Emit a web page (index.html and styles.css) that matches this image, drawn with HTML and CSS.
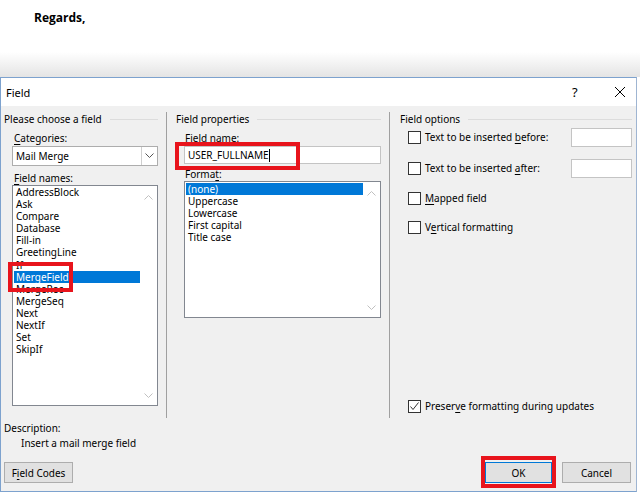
FILE: index.html
```html
<!DOCTYPE html>
<html lang="en">
<head>
  <meta charset="UTF-8" />
  <title>Field</title>
  <link rel="stylesheet" href="styles.css">
</head>
<body>

  <div class="doc">
    <p class="regards">Regards,</p>
  </div>

  <div class="dialog">
    <div class="titlebar">
      <span class="title">Field</span>
      <span class="help">?</span>
      <span class="close">
        <svg width="12" height="12" viewBox="0 0 12 12"><path d="M1 1L11 11M11 1L1 11" stroke="#000" stroke-width="1" fill="none"/></svg>
      </span>
    </div>

    <div class="dlg-body">
      <div class="panes">

        <!-- left: category + field list -->
        <div class="pane pane-choose">
          <div class="group-title"><span>Please choose a field</span></div>
          <div class="lbl"><u>C</u>ategories:</div>
          <div class="combo">
            <span class="combo-text">Mail Merge</span>
            <span class="combo-btn">
              <svg width="9" height="6" viewBox="0 0 9 6"><path d="M0.5 0.5L4.5 4.5L8.5 0.5" stroke="#555" fill="none"/></svg>
            </span>
          </div>
          <div class="lbl"><u>F</u>ield names:</div>
          <div class="listbox names">
            <ul class="items">
              <li>AddressBlock</li>
              <li>Ask</li>
              <li>Compare</li>
              <li>Database</li>
              <li>Fill-in</li>
              <li>GreetingLine</li>
              <li>If</li>
              <li class="sel"><span class="marked">MergeField<i class="callout callout-list"></i></span></li>
              <li>MergeRec</li>
              <li>MergeSeq</li>
              <li>Next</li>
              <li>NextIf</li>
              <li>Set</li>
              <li>SkipIf</li>
            </ul>
            <div class="vscroll">
              <svg width="9" height="6" viewBox="0 0 9 6"><path d="M0.5 5.5L4.5 1.5L8.5 5.5" stroke="#c0c0c0" fill="none"/></svg>
              <svg width="9" height="6" viewBox="0 0 9 6"><path d="M0.5 0.5L4.5 4.5L8.5 0.5" stroke="#c0c0c0" fill="none"/></svg>
            </div>
          </div>
        </div>

        <!-- middle: name + format -->
        <div class="pane pane-props">
          <div class="group-title"><span>Field properties</span></div>
          <div class="indent">
            <div class="lbl">F<u>i</u>eld name:</div>
            <div class="textbox name-box">USER_FULLNAME<span class="caret"></span><i class="callout callout-name"></i></div>
            <div class="lbl lbl-format">Forma<u>t</u>:</div>
            <div class="listbox formats">
              <ul class="items">
                <li class="sel">(none)</li>
                <li>Uppercase</li>
                <li>Lowercase</li>
                <li>First capital</li>
                <li>Title case</li>
              </ul>
              <div class="vscroll">
                <svg width="9" height="6" viewBox="0 0 9 6"><path d="M0.5 5.5L4.5 1.5L8.5 5.5" stroke="#c0c0c0" fill="none"/></svg>
                <svg width="9" height="6" viewBox="0 0 9 6"><path d="M0.5 0.5L4.5 4.5L8.5 0.5" stroke="#c0c0c0" fill="none"/></svg>
              </div>
            </div>
          </div>
        </div>

        <!-- right: options -->
        <div class="pane pane-options">
          <div class="group-title"><span>Field options</span></div>
          <div class="opts">
            <div class="opt opt-input">
              <span class="check"></span>
              <span class="opt-text">Text to be inserted <u>b</u>efore:</span>
              <span class="small-box"></span>
            </div>
            <div class="opt opt-input">
              <span class="check"></span>
              <span class="opt-text">Text to be inserted <u>a</u>fter:</span>
              <span class="small-box"></span>
            </div>
            <div class="opt">
              <span class="check"></span>
              <span class="opt-text"><u>M</u>apped field</span>
            </div>
            <div class="opt">
              <span class="check"></span>
              <span class="opt-text">V<u>e</u>rtical formatting</span>
            </div>
          </div>
          <div class="opt opt-bottom">
            <span class="check checked">
              <svg width="11" height="11" viewBox="0 0 11 11"><path d="M1.5 5.5L4 8.5L9.5 1.5" stroke="#333" fill="none"/></svg>
            </span>
            <span class="opt-text">Preser<u>v</u>e formatting during updates</span>
          </div>
        </div>

      </div>

      <div class="desc">
        <div>Description:</div>
        <div class="desc-text">Insert a mail merge field</div>
      </div>

      <div class="buttons">
        <button class="btn">F<u>i</u>eld Codes</button>
        <span class="spacer"></span>
        <button class="btn btn-default">OK<i class="callout callout-ok"></i></button>
        <button class="btn">Cancel</button>
      </div>
    </div>
  </div>

</body>
</html>
```

FILE: styles.css
```css
body {
  margin: 0;
  padding: 0;
  background-color: #fff;
  font-family: "Noto Sans", sans-serif;
  font-size: 10px;
  color: #000;
  overflow: hidden;
}

u {
  text-decoration-thickness: 1px;
  text-underline-offset: 2px;
}

/* the word document behind the dialog */
.doc {
  height: 77px;
  background: linear-gradient(to bottom, #fff 0, #fff 52px, #e4e4e4 77px);
}

.regards {
  margin: 0;
  padding: 9px 0 0 34px;
  font-family: "Open Sans", sans-serif;
  font-weight: bold;
  font-size: 12px;
}

.dialog {
  width: 635px;
  border: 1px solid #7da2ce;
  border-right-color: #9fb5d2;
  background: #f0f0f0;
}

.titlebar {
  height: 28px;
  background: #fff;
  display: flex;
  align-items: center;
  padding-left: 5px;
}

.title {
  flex: 1;
  font-size: 11px;
}

.help {
  width: 14px;
  margin-right: 28px;
  font-size: 13px;
}

.close {
  width: 22px;
  display: flex;
  align-items: center;
}

.dlg-body {
  height: 385px;
  display: flex;
  flex-direction: column;
}

.panes {
  display: flex;
  height: 306px;
  margin-top: 6px;
}

.pane {
  box-sizing: border-box;
}

.pane-choose {
  width: 165px;
  padding: 0 8px 0 3px;
}

.pane-props {
  width: 223px;
  border-left: 1px solid #a0a0a0;
  padding: 0 8px 0 9px;
}

.pane-options {
  flex: 1;
  border-left: 1px solid #a0a0a0;
  padding: 0 4px 0 10px;
  display: flex;
  flex-direction: column;
}

.group-title {
  display: flex;
  align-items: center;
  height: 14px;
}

.group-title::after {
  content: "";
  flex: 1;
  height: 1px;
  background: #dcdcdc;
  margin-left: 8px;
}

.lbl {
  height: 14px;
  line-height: 14px;
  margin-top: 5px;
  padding-left: 10px;
}

.combo {
  margin: 1px 0 0 8px;
  height: 20px;
  box-sizing: border-box;
  border: 1px solid #adadad;
  background: #fff;
  display: flex;
  align-items: center;
}

.combo-text {
  flex: 1;
  padding-left: 3px;
}

.combo-btn {
  width: 15px;
  height: 18px;
  border-left: 1px solid #cfcfcf;
  display: flex;
  align-items: center;
  justify-content: center;
}

.listbox {
  box-sizing: border-box;
  border: 1px solid #828790;
  background: #fff;
  display: flex;
  position: relative;
}

.names {
  margin: 0 0 0 8px;
  height: 221px;
}

.items {
  list-style: none;
  margin: 0;
  padding: 0 0 0 1px;
  flex: 1;
}

.items li {
  height: 12.1px;
  line-height: 12px;
  padding-left: 2px;
  white-space: nowrap;
}

.items li.sel {
  background: #0078d7;
  color: #fff;
}

.vscroll {
  width: 17px;
  display: flex;
  flex-direction: column;
  justify-content: space-between;
  align-items: center;
  padding: 8px 0 6px;
}

.marked {
  position: relative;
}

/* red annotation frames drawn on top of the controls */
.callout {
  position: absolute;
  border: 4px solid #e8141c;
  pointer-events: none;
}

.callout-list {
  left: -8px;
  right: -4px;
  top: -8px;
  bottom: -8px;
}

.indent {
  padding-left: 8px;
}

.pane-props .lbl {
  padding-left: 1px;
}

.textbox {
  position: relative;
  height: 18px;
  box-sizing: border-box;
  border: 1px solid #c4c4c4;
  background: #fff;
  margin-top: 1px;
  display: flex;
  align-items: center;
  padding-left: 3px;
}

.caret {
  display: inline-block;
  width: 1px;
  height: 13px;
  background: #000;
}

.callout-name {
  left: -10px;
  top: -5px;
  width: 125px;
  bottom: -7px;
  box-sizing: border-box;
}

.lbl-format {
  margin-top: 3px;
}

.formats {
  margin-top: 0;
  height: 137px;
}

.formats .items {
  padding-top: 1px;
}

.opts {
  display: flex;
  flex-direction: column;
}

.opt {
  display: flex;
  align-items: center;
  height: 20px;
  padding-left: 8px;
}

.opts .opt-input {
  margin-top: 1px;
}

.opts .opt-input + .opt-input {
  margin-top: 11px;
}

.opts .opt:nth-child(3) {
  margin-top: 10px;
}

.opts .opt:nth-child(4) {
  margin-top: 9px;
}

.check {
  width: 13px;
  height: 13px;
  box-sizing: border-box;
  border: 1px solid #333;
  background: #fff;
  margin-right: 4px;
  display: flex;
  align-items: center;
  justify-content: center;
}

.opt-text {
  flex: 1;
}

.small-box {
  width: 61px;
  height: 19px;
  box-sizing: border-box;
  border: 1px solid #c4c4c4;
  background: #fff;
}

.opt-bottom {
  margin-top: auto;
  margin-bottom: 2px;
}

.desc {
  padding: 3px 0 0 3px;
  line-height: 15px;
}

.desc-text {
  padding-left: 17px;
}

.buttons {
  display: flex;
  align-items: center;
  padding: 0 5px 0 3px;
  margin-top: 11px;
}

.spacer {
  flex: 1;
}

.btn {
  position: relative;
  font-family: inherit;
  font-size: 10px;
  height: 21px;
  min-width: 69px;
  padding: 0 6px;
  background: #e1e1e1;
  border: 1px solid #adadad;
  color: #000;
}

.btn-default {
  border: 1px solid #0078d7;
  min-width: 67px;
  margin-right: 10px;
}

.callout-ok {
  left: -5px;
  right: -5px;
  top: -7px;
  bottom: -6px;
}
```
